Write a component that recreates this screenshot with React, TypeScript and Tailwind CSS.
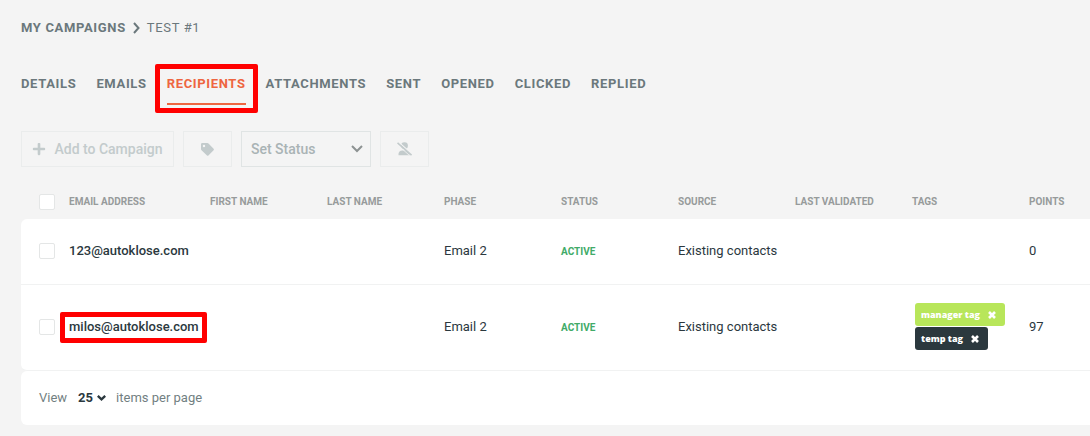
import React from "react";
import { FaPlus } from "react-icons/fa";

type Tag = { name: string; color: string };
type Recipient = {
  email: string;
  phase: string;
  status: string;
  source: string;
  tags: Tag[];
  points: number;
  marked?: boolean;
};

const tabs = ["Details", "Emails", "Recipients", "Attachments", "Sent", "Opened", "Clicked", "Replied"];
const activeTab = "Recipients";

const columns = [
  { label: "Email address", width: "w-[141px]" },
  { label: "First name", width: "w-[117px]" },
  { label: "Last name", width: "w-[117px]" },
  { label: "Phase", width: "w-[117px]" },
  { label: "Status", width: "w-[117px]" },
  { label: "Source", width: "w-[117px]" },
  { label: "Last validated", width: "w-[117px]" },
  { label: "Tags", width: "w-[117px]" },
  { label: "Points", width: "w-[61px]" },
];

const recipients: Recipient[] = [
  { email: "123@autoklose.com", phase: "Email 2", status: "Active", source: "Existing contacts", tags: [], points: 0 },
  {
    email: "milos@autoklose.com",
    phase: "Email 2",
    status: "Active",
    source: "Existing contacts",
    tags: [
      { name: "manager tag", color: "bg-[#b8e65a]" },
      { name: "temp tag", color: "bg-[#2b383e]" },
    ],
    points: 97,
    marked: true,
  },
];

function Checkbox({ label }: { label: string }) {
  return (
    <input
      type="checkbox"
      aria-label={label}
      className="block size-4 appearance-none rounded-xs border border-[#e4e6e6] bg-white checked:bg-[#ee6540]"
    />
  );
}

function TagIcon() {
  return (
    <svg viewBox="0 0 13 13" className="size-[13px]" fill="currentColor" aria-hidden="true">
      <path
        fillRule="evenodd"
        d="M1.2 0H6.3Q7 0 7.5.5L12.6 5.8Q13.2 6.5 12.6 7.2L7.4 12.5Q6.7 13.2 6 12.5L.5 7.2Q0 6.700 0 6V1.200Q0 0 1.200 0ZM3 1.800A1.200 1.200 0 1 0 3 4.200A1.200 1.200 0 1 0 3 1.800Z"
      />
    </svg>
  );
}

function UserOffIcon() {
  return (
    <svg viewBox="0 0 15 14" className="h-[14px] w-[15px]" aria-hidden="true">
      <circle cx="7.500" cy="3.700" r="3.400" fill="currentColor" />
      <path d="M1.500 13.300V12Q1.500 8.700 5.500 8.400H9.500Q12.500 9 12.500 12V13.300Z" fill="currentColor" />
      <path d="M1.200 -.2L15.600 12.400" stroke="#f4f4f4" strokeWidth="1.200" />
      <path d="M.5 .9L14.500 13.200" stroke="currentColor" strokeWidth="1.600" />
      <path d="M-.4 2L12 13" stroke="#f4f4f4" strokeWidth=".8" />
    </svg>
  );
}

function Highlight({ className }: { className: string }) {
  return <span aria-hidden="true" className={`pointer-events-none absolute rounded-xs border-5 border-[#ff0000] ${className}`} />;
}

export default function App() {
  return (
    <main className="min-h-screen bg-[#f4f4f4] pt-5 pb-[11px] pl-[21px] font-['Roboto',sans-serif] text-[13px] leading-4 text-[#2b383e]">
      <nav aria-label="Breadcrumb" className="flex items-center gap-[7px] tracking-wider text-[#6b787c] uppercase">
        <a href="#campaigns" className="font-bold">
          My campaigns
        </a>
        <svg viewBox="0 0 7 12" className="h-3 w-[7px]" fill="none" stroke="currentColor" strokeWidth="2" aria-hidden="true">
          <path d="M1 1l4.500 5L1 11" />
        </svg>
        <span>Test #1</span>
      </nav>

      <nav aria-label="Campaign sections" className="mt-10 flex items-start gap-5 font-bold tracking-wider text-[#6b787c] uppercase">
        {tabs.map((tab) => (
          <a
            key={tab}
            href={`#${tab.toLowerCase()}`}
            aria-current={tab === activeTab ? "page" : undefined}
            className={tab === activeTab ? "relative border-b-2 border-[#ee6540] pb-[11px] text-[#ee6540]" : "pb-[13px]"}
          >
            {tab}
            {tab === activeTab && <Highlight className="-inset-x-3 -top-3 -bottom-[10px]" />}
          </a>
        ))}
      </nav>

      <div className="mt-[26px] flex gap-[9px] text-sm font-medium text-[#c3cbcc]">
        <button type="button" className="flex h-9 w-[153px] items-center justify-center gap-2 border border-[#eaecec] whitespace-nowrap">
          <FaPlus className="size-[14px]" aria-hidden="true" />
          Add to Campaign
        </button>
        <button type="button" aria-label="Tag recipients" className="flex h-9 w-[49px] items-center justify-center border border-[#eaecec]">
          <TagIcon />
        </button>
        <div className="relative">
          <select aria-label="Set Status" className="h-9 w-[130px] appearance-none border border-[#e0e4e4] pr-8 pb-px pl-[9px] text-[#a9b3b5]">
            <option>Set Status</option>
          </select>
          <svg viewBox="0 0 12 8" className="pointer-events-none absolute top-[14px] right-2 h-2 w-3" fill="none" stroke="#8d9292" strokeWidth="2" aria-hidden="true">
            <path d="M1 1l5 5 5-5" />
          </svg>
        </div>
        <button type="button" aria-label="Deactivate recipients" className="flex h-9 w-[49px] items-center justify-center border border-[#eaecec]">
          <UserOffIcon />
        </button>
      </div>

      <div className="mt-[17px] overflow-x-auto">
        <table className="w-full table-fixed border-separate border-spacing-0 text-left">
          <thead>
            <tr className="h-[35px] text-[10px] text-[#979b9b] uppercase">
              <th className="w-12 pl-[18px]">
                <Checkbox label="Select all recipients" />
              </th>
              {columns.map((column) => (
                <th key={column.label} className={`${column.width} font-bold`}>
                  {column.label}
                </th>
              ))}
            </tr>
          </thead>
          <tbody>
            {recipients.map((r, index) => (
              <tr
                key={r.email}
                className={`${index === 0 ? "h-[66px] [&>td:first-child]:rounded-tl-md" : "h-[86px] [&>td:first-child]:rounded-bl-md"} [&>td]:border-b [&>td]:border-[#f1f2f2] [&>td]:bg-white`}
              >
                <td className="pb-[2px] pl-[18px]">
                  <Checkbox label={`Select ${r.email}`} />
                </td>
                <td className="pb-[2px] font-medium">
                  <span className="relative">
                    {r.email}
                    {r.marked && <Highlight className="-top-[7px] -right-2 -bottom-[9px] -left-[9px]" />}
                  </span>
                </td>
                <td />
                <td />
                <td className="pb-[2px]">{r.phase}</td>
                <td className="text-[10px] font-bold text-[#41ab68] uppercase">{r.status}</td>
                <td className="pb-[2px]">{r.source}</td>
                <td />
                <td className="pb-[2px] pl-[3px]">
                  <div className="flex flex-col items-start gap-px">
                    {r.tags.map((tag) => (
                      <span
                        key={tag.name}
                        className={`${tag.color} flex h-[23px] items-center gap-2 rounded-[3px] pr-[9px] pl-[6px] font-['Open_Sans',sans-serif] text-[9px] font-extrabold text-white`}
                      >
                        {tag.name}
                        <button type="button" aria-label={`Remove ${tag.name}`}>
                          <svg viewBox="0 0 8 8" className="size-2" stroke="currentColor" strokeWidth="2.600" aria-hidden="true">
                            <path d="M1 1l6 6M7 1L1 7" />
                          </svg>
                        </button>
                      </span>
                    ))}
                  </div>
                </td>
                <td className="pb-[2px]">{r.points}</td>
              </tr>
            ))}
          </tbody>
        </table>
      </div>

      <footer className="flex h-[54px] items-center rounded-l-md bg-white pl-[18px] text-[#727f82]">
        <label htmlFor="page-size">View</label>
        <div className="relative ml-[11px]">
          <select id="page-size" className="w-8 appearance-none font-bold text-[#2b383e]">
            <option>25</option>
          </select>
          <svg viewBox="0 0 9 6" className="pointer-events-none absolute top-[5px] right-1 h-[6px] w-[9px] text-[#2b383e]" fill="none" stroke="currentColor" strokeWidth="2.400" aria-hidden="true">
            <path d="M.8 .9l3.700 3.400L8.200 .9" />
          </svg>
        </div>
        <span className="ml-[6px]">items per page</span>
      </footer>
    </main>
  );
}
